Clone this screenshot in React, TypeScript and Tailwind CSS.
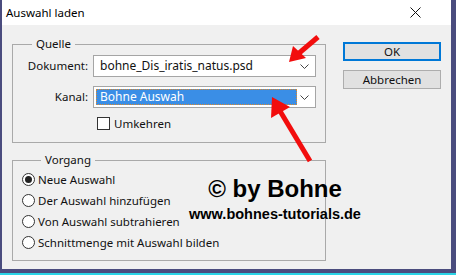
import React from "react";

const ui = { fontFamily: '"Noto Sans", "Segoe UI", sans-serif' };

function Chevron() {
  return (
    <svg width="9" height="5" viewBox="0 0 9 5" className="shrink-0">
      <path d="M0.5 0.5 L4.5 4.5 L8.5 0.5" fill="none" stroke="#444" strokeWidth="1" />
    </svg>
  );
}

function Radio({ checked, label }: { checked?: boolean; label: string }) {
  return (
    <div className="flex h-[21px] items-center gap-[3px]">
      <span className="flex h-[13px] w-[13px] items-center justify-center rounded-full border border-[#333] bg-white">
        {checked && <span className="h-[7px] w-[7px] rounded-full bg-[#222]" />}
      </span>
      <span className="text-[11.5px] leading-[16px] text-[#111]">{label}</span>
    </div>
  );
}

export default function App() {
  return (
    <div
      className="relative h-[275px] w-[456px] overflow-hidden bg-[#4a4c7e]"
      style={ui}
    >
      {/* cyan strip at the very bottom */}
      <div className="absolute bottom-0 left-0 h-[2px] w-full bg-[#2ad4e6]" />

      <div className="ml-[2px] flex h-[269px] w-[449px] flex-col bg-[#f0f0f0]">
        {/* title bar */}
        <div className="flex h-[25px] items-center justify-between bg-white pl-[4px] pr-[30px]">
          <span className="text-[11.5px] text-black">Auswahl laden</span>
          <svg width="11" height="11" viewBox="0 0 11 11">
            <path d="M0.5 0.5 L10.5 10.5 M10.5 0.5 L0.5 10.5" stroke="#111" strokeWidth="1" />
          </svg>
        </div>

        {/* body */}
        <div className="flex gap-[17px] pl-[10px] pt-[11px]">
          <div className="flex w-[314px] flex-col gap-[9px]">
            <fieldset className="border border-[#a9a9a9] pb-[12px] pl-0 pr-[9px] pt-[3px]">
              <legend className="ml-[19px] h-[16px] px-[4px] text-[11.5px] leading-[16px] text-[#111]">
                Quelle
              </legend>
              <div className="flex flex-col gap-[9px]">
                <div className="flex items-center">
                  <span className="w-[75px] text-right text-[11.5px] leading-[16px] text-[#111]">Dokument:</span>
                  <div className="ml-[5px] flex h-[22px] flex-1 items-center justify-between border border-[#a5a5a5] bg-white pl-[6px] pr-[6px]">
                    <span className="text-[12px] leading-[16px] text-[#111]">bohne_Dis_iratis_natus.psd</span>
                    <Chevron />
                  </div>
                </div>
                <div className="flex items-center">
                  <span className="w-[75px] text-right text-[11.5px] leading-[16px] text-[#111]">Kanal:</span>
                  <div className="ml-[5px] flex h-[22px] flex-1 items-center justify-between border border-[#a5a5a5] bg-white pl-[2px] pr-[6px]">
                    <div className="flex h-[16px] w-[201px] items-center border border-dotted border-[#e08a2a] bg-[#3a8ee6] pl-[3px]">
                      <span className="text-[12px] leading-[14px] text-white">Bohne Auswah</span>
                    </div>
                    <Chevron />
                  </div>
                </div>
                <div className="ml-[84px] flex h-[13px] items-center gap-[4px]">
                  <span className="h-[13px] w-[13px] border border-[#333] bg-white" />
                  <span className="text-[11.5px] leading-[16px] text-[#111]">Umkehren</span>
                </div>
              </div>
            </fieldset>

            <fieldset className="border border-[#a9a9a9] pb-[7px] pl-[9px] pr-[9px] pt-[1px]">
              <legend className="ml-[19px] h-[16px] px-[4px] text-[11.5px] leading-[16px] text-[#111]">
                Vorgang
              </legend>
              <div className="flex flex-col">
                <Radio checked label="Neue Auswahl" />
                <Radio label="Der Auswahl hinzufügen" />
                <Radio label="Von Auswahl subtrahieren" />
                <Radio label="Schnittmenge mit Auswahl bilden" />
              </div>
            </fieldset>
          </div>

          <div className="flex w-[98px] flex-col gap-[9px] pt-[6px]">
            <button className="flex h-[19px] items-center justify-center border-2 border-[#0078d7] bg-[#e1e1e1] text-[11.5px] text-[#111]">
              OK
            </button>
            <button className="flex h-[19px] items-center justify-center border border-[#adadad] bg-[#e1e1e1] text-[11.5px] text-[#111]">
              Abbrechen
            </button>
          </div>
        </div>
      </div>

      {/* watermark */}
      <div
        className="absolute left-[186px] top-[175px] flex w-[178px] flex-col items-center text-black"
        style={{ fontFamily: '"Liberation Sans", Arial, sans-serif' }}
      >
        <span className="text-[24px] font-bold leading-[28px]">© by Bohne</span>
        <span className="mt-[3px] text-[14.5px] font-bold leading-[16px]">www.bohnes-tutorials.de</span>
      </div>

      {/* red arrows */}
      <svg className="absolute left-0 top-0" width="456" height="275" viewBox="0 0 456 275">
        <path d="M318 37 L298 54" stroke="#f20d0d" strokeWidth="5" />
        <path d="M289 62 L293 46 L306 58 Z" fill="#f20d0d" />
        <path d="M310 161 L280 111" stroke="#f20d0d" strokeWidth="5" />
        <path d="M272 97 L271 118 L290 107 Z" fill="#f20d0d" />
      </svg>
    </div>
  );
}
